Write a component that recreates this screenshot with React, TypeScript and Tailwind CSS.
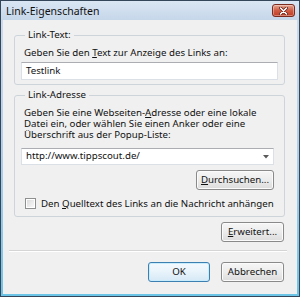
const FONT = "font-['Noto_Sans',sans-serif]";

function Btn({ children, w, focused }: { children: React.ReactNode; w: string; focused?: boolean }) {
  return (
    <div
      className={`${w} h-[20px] flex items-center justify-center rounded-[3px] border text-[9.7px] text-[#111] ${
        focused
          ? "border-[#3c7fb1] bg-gradient-to-b from-[#f4fafe] via-[#e8f3fb] to-[#d6e9f6] shadow-[inset_0_0_0_1px_#c8ecfc]"
          : "border-[#8a8a8a] bg-gradient-to-b from-[#f6f6f6] via-[#ececec] to-[#dcdcdc] shadow-[inset_0_0_0_1px_#fbfbfb]"
      }`}
    >
      {children}
    </div>
  );
}

function U({ children }: { children: React.ReactNode }) {
  return <span className="underline underline-offset-[1px]">{children}</span>;
}

export default function App() {
  return (
    <div
      className={`${FONT} w-[300px] h-[297px] border border-[#34465a] bg-gradient-to-b from-[#cfdcec] via-[#b3cfe8] to-[#6cc4e6] flex flex-col`}
    >
      {/* Title bar */}
      <div className="h-[19px] flex items-start justify-between pl-[5px] pr-[4px] bg-gradient-to-b from-[#dae6f3] to-[#c6d7ea]">
        <span className="mt-[3px] text-[10.5px] leading-[14px] text-[#111]">Link-Eigenschaften</span>
        <div className="mt-[3px] w-[23px] h-[13px] rounded-[3px] border border-[#7a2a1e] bg-gradient-to-b from-[#e4a592] via-[#cf5c44] to-[#c23c22] flex items-center justify-center shadow-[inset_0_0_0_1px_rgba(255,255,255,0.35)]">
          <svg width="9" height="8" viewBox="0 0 9 8">
            <path d="M1.5 1l6 6M7.5 1l-6 6" stroke="#5a1d14" strokeWidth="3" strokeLinecap="round" />
            <path d="M1.5 1l6 6M7.5 1l-6 6" stroke="#ffffff" strokeWidth="1.6" strokeLinecap="round" />
          </svg>
        </div>
      </div>

      {/* Client area */}
      <div className="flex-1 mx-[2px] mb-[2px] bg-[#f0f0f0] flex flex-col pl-[11px] pr-[12px] text-[#111]">
        {/* Link-Text group */}
        <fieldset className="mt-[8px] border border-[#cdd4da] rounded-[3px] pl-[6px] pr-[6px] pb-[4px]">
          <legend className="ml-[4px] px-[3px] text-[9.7px] leading-[14px]">Link-Text:</legend>
          <p className="mt-[5px] pl-[3px] text-[9.7px] leading-[11px]">
            Geben Sie den <U>T</U>ext zur Anzeige des Links an:
          </p>
          <div className="mt-[4px] h-[18px] bg-white border border-[#dbe0e6] border-t-[#abadb3] flex items-center pl-[4px] text-[9.7px]">
            Testlink
          </div>
        </fieldset>

        {/* Link-Adresse group */}
        <fieldset className="mt-[3px] border border-[#cdd4da] rounded-[3px] pl-[6px] pr-[10px] pb-[7px] flex flex-col">
          <legend className="ml-[4px] px-[3px] text-[9.7px] leading-[14px]">Link-Adresse</legend>
          <p className="mt-[5px] pl-[3px] text-[9.7px] leading-[11px]">
            Geben Sie eine Webseiten-<U>A</U>dresse oder eine lokale Datei ein, oder wählen Sie einen Anker oder eine Überschrift aus der Popup-Liste:
          </p>
          <div className="mt-[8px] h-[17px] bg-white border border-[#dbe0e6] border-t-[#abadb3] flex items-center justify-between pl-[4px] pr-[4px] text-[9.7px]">
            <span>http://www.tippscout.de/</span>
            <svg width="6" height="4" viewBox="0 0 6 4">
              <path d="M0 0h6L3 3.5z" fill="#5a5a5a" />
            </svg>
          </div>
          <div className="mt-[5px] flex justify-end">
            <Btn w="w-[78px]">
              <U>D</U>urchsuchen...
            </Btn>
          </div>
          <div className="mt-[8px] flex items-center pl-[4px]">
            <div className="w-[11px] h-[11px] border border-[#8e8f8f] bg-white p-[1px]">
              <div className="w-full h-full bg-gradient-to-br from-[#dcdcdc] to-[#f8f8f8]" />
            </div>
            <span className="ml-[5px] text-[9.7px] leading-[11px]">
              Den <U>Q</U>uelltext des Links an die Nachricht anhängen
            </span>
          </div>
        </fieldset>

        <div className="mt-[5px] flex justify-end pr-[1px]">
          <Btn w="w-[63px]">
            <U>E</U>rweitert...
          </Btn>
        </div>

        <div className="mt-[8px] -ml-[5px] -mr-[2px] h-[2px] border-t border-[#d5d5d5] border-b border-b-white" />

        <div className="mt-[10px] flex justify-end gap-[11px] pr-[1px]">
          <Btn w="w-[62px]" focused>
            OK
          </Btn>
          <Btn w="w-[63px]">Abbrechen</Btn>
        </div>
      </div>
    </div>
  );
}
